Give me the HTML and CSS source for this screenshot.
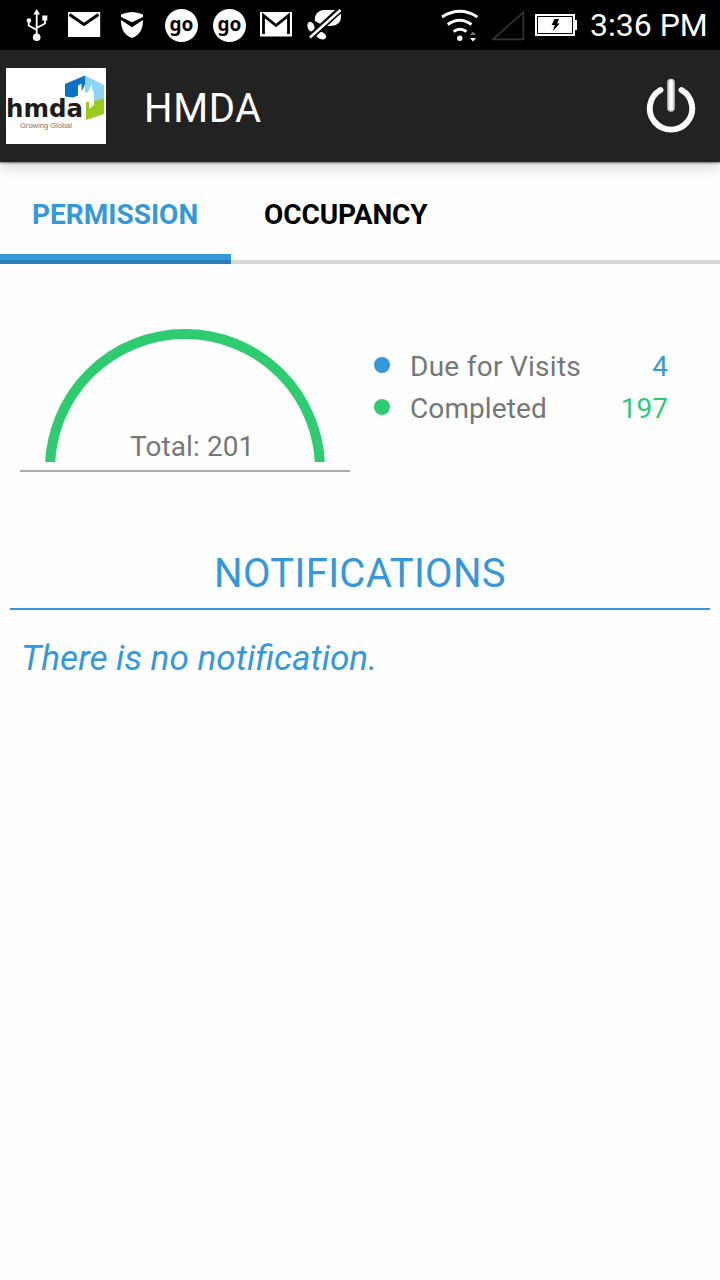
FILE: index.html
```html
<!DOCTYPE html>
<html lang="en">
<head>
<meta charset="utf-8">
<title>HMDA</title>
<link rel="stylesheet" href="styles.css">
</head>
<body>
<header class="status-bar">
  <div class="status-icons">
    <svg class="icon-usb" width="22" height="34" viewBox="26 8 22 34">
      <g fill="none" stroke="#fff" stroke-width="1.8"><path d="M36.700 14V35M28.700 21V25.500L36.700 30M45 19V23.500L36.700 28"/></g>
      <g fill="#fff"><path d="M36.700 9l3.300 5.500h-6.600z"/><circle cx="36.700" cy="37.200" r="3.800"/><circle cx="28.900" cy="20.500" r="2.300"/><path d="M42.300 15.500h5v5h-5z"/></g>
    </svg>
    <svg width="34" height="34" viewBox="67 8 34 34">
      <path fill="#fff" d="M68 12h32.200v25H68z"/><path d="M69.500 14.500L84 24.500 98.500 14.500" fill="none" stroke="#000" stroke-width="3"/>
    </svg>
    <svg width="24" height="34" viewBox="120 8 24 34">
      <path fill="#fff" d="M121 14.500Q126 12 132 12t11 2.500V17l-11 5.300L121 17zM121 20l11 7.300 11-7.300c0 8-2.500 15-11 18-8.500-3-11-10-11-18z"/>
    </svg>
    <span class="go-badge">go</span>
    <span class="go-badge">go</span>
    <svg class="icon-gmail" width="34" height="34" viewBox="259 8 34 34">
      <path fill="#fff" d="M260 12h32v24.500h-32z"/><path d="M263.500 34V15.500L276 25.500 288.500 15.500V34" fill="none" stroke="#000" stroke-width="2.800"/>
    </svg>
    <svg width="36" height="34" viewBox="306 8 36 34">
      <g fill="#fff"><path d="M315 21c-1-6 3-11 9-11h12c5 0 5 3 5 7 0 6-5 9-11 9h-6z"/><ellipse cx="311" cy="26.800" rx="3.400" ry="5.200" transform="rotate(-20 311 26.800)"/><ellipse cx="321" cy="35.500" rx="5.500" ry="3.500" transform="rotate(25 321 35.500)"/></g>
      <path d="M308 39L341 9" stroke="#000" stroke-width="6.500"/><path d="M310 37.500L340.500 10" stroke="#fff" stroke-width="2.600"/>
    </svg>
  </div>
  <div class="status-system">
    <svg width="38" height="34" viewBox="440 8 38 34">
      <g fill="none" stroke="#fff" stroke-width="2.800"><path d="M442 17Q459.700 5.500 477.500 17M447.700 24.500Q459.700 16 471.500 24.500M453.500 31.500Q460 27 466.500 31.500"/></g>
      <circle cx="459.800" cy="38.200" r="2.700" fill="#fff"/><path fill="#777" d="M470 35l3-3.500 3 3.500z"/><path fill="#fff" d="M470 38h6l-3 3.500z"/>
    </svg>
    <svg width="34" height="34" viewBox="491 8 34 34"><path d="M493 39.300L523.300 12.300V39.300z" fill="none" stroke="#333" stroke-width="1.700"/></svg>
    <svg width="43" height="34" viewBox="535 8 43 34">
      <path fill="#fff" d="M535 14h40v6h2v10h-2v6h-40z"/><path d="M537.500 16.500h35v17h-35z" fill="none" stroke="#000"/><path d="M554.500 19h4.500l-1.800 4.500h2.600l-7 7.500 2-6h-3.200z"/>
    </svg>
    <span class="clock">3:36 PM</span>
  </div>
</header>
<div class="app-bar">
  <svg class="logo" width="100" height="76" viewBox="6 68 100 76">
    <path fill="#fff" d="M6 68h100v76H6z"/>
    <path fill="#0872c4" d="M65 84l20-8.500v9l-3.500 7v-8l-3.500 2v10l-5 2-8-1z"/>
    <path fill="#8bd3f7" d="M85 75.500l19 9.500v13l-10 3v-9l-2-3v-5l-4 8-3 1z"/>
    <path fill="#99ca20" d="M104 98v16l-18 6v-18h3v7l5-4v-4z"/>
    <text class="logo-name" x="6" y="116.800" textLength="77" lengthAdjust="spacingAndGlyphs">hmda</text>
    <text class="logo-motto" x="20" y="127.500" textLength="52" lengthAdjust="spacingAndGlyphs">Growing Global</text>
  </svg>
  <h1 class="app-title">HMDA</h1>
  <svg width="50" height="56" viewBox="646 78 50 56">
    <g fill="none" stroke="#fff" stroke-linecap="round"><path d="M660.500 90A21.200 21.200 0 1 0 681.500 90" stroke-width="5.900"/><path d="M671 82.500v25.500" stroke="#ccc" stroke-width="7.500"/><path d="M671 81.500v27" stroke-width="3.500"/></g>
  </svg>
</div>
<nav class="tabs">
  <a class="tab tab-active">PERMISSION</a>
  <a class="tab">OCCUPANCY</a>
</nav>
<main>
  <section class="summary">
    <div class="gauge">
      <svg class="gauge-arc" width="280" height="133" viewBox="45 329 280 133"><circle cx="185" cy="469" r="135" fill="none" stroke="#2ecc71" stroke-width="10"/></svg>
      <span class="gauge-total">Total: 201</span>
    </div>
    <div class="legend">
      <div class="legend-row visits"><i class="dot"></i><span class="label label-visits">Due for Visits</span><span class="value">4</span></div>
      <div class="legend-row completed"><i class="dot"></i><span class="label">Completed</span><span class="value">197</span></div>
    </div>
  </section>
  <section class="notifications">
    <h2 class="notifications-title">NOTIFICATIONS</h2>
    <p class="empty">There is no notification.</p>
  </section>
</main>
</body>
</html>
```
FILE: styles.css
```css
* { box-sizing: border-box; }
body { margin: 0; height: 1280px; background: #fefefe; font-family: Roboto, sans-serif; overflow: hidden; }
svg { display: block; flex: none; }
.status-bar { height: 50px; background: #000; display: flex; justify-content: space-between; align-items: center; padding: 0 12px 0 26px; }
.status-icons { display: flex; align-items: center; gap: 14px; }
.icon-usb { margin-right: 5px; }
.status-icons svg:nth-child(2) { margin-right: 5px; }
.status-icons svg:nth-child(3) { margin-right: 7px; }
.go-badge { width: 33px; height: 33px; border-radius: 50%; background: #fff; color: #000; font: bold 19px/30px "Noto Sans", sans-serif; text-align: center; margin-right: 1px; }
.icon-gmail { margin: 0 -1px 0 -2px; }
.status-system { display: flex; align-items: center; }
.status-system svg:nth-child(1) { margin-right: 13px; }
.status-system svg:nth-child(2) { margin-right: 10px; }
.clock { color: #fff; font-size: 32px; line-height: 52px; width: 118px; margin-left: 12px; white-space: nowrap; }
.app-bar { position: relative; height: 112px; background: #222; display: flex; align-items: center; padding: 0 24px 0 6px; box-shadow: 0 1px 2px rgba(0,0,0,.55), 0 5px 14px rgba(0,0,0,.16); }
.logo-name { font: bold 25px "DejaVu Sans", sans-serif; fill: #1c1c1c; }
.logo-motto { font: 7.5px "Liberation Sans", sans-serif; fill: #777; }
.app-title { flex: 1; margin: 6px 0 0 38px; color: #fff; font-size: 40px; font-weight: 400; line-height: 48px; letter-spacing: .6px; }
.tabs { height: 102px; display: flex; border-bottom: 4px solid #d8d8d8; }
.tab { height: 102px; padding: 0 32px 0 33px; font-size: 28px; font-weight: 700; line-height: 106px; letter-spacing: -.1px; color: #000; }
.tab-active { width: 231px; padding: 0 0 0 32px; letter-spacing: 0; color: #3498db; background: linear-gradient(#3498db 6px, #2980b9 6px) bottom / 100% 10px no-repeat; }
.summary { display: flex; height: 208px; padding-left: 20px; margin-bottom: 70px; }
.gauge { position: relative; width: 330px; border-bottom: 2px solid #aaa; padding: 65px 0 0 25px; }
.gauge-total { position: absolute; left: 110px; top: 166px; font-size: 28px; line-height: 34px; color: #777; white-space: nowrap; letter-spacing: .1px; }
.legend { width: 318px; padding: 81px 0 0 24px; }
.legend-row { display: flex; align-items: center; height: 42px; font-size: 28px; }
.dot { width: 16px; height: 16px; border-radius: 50%; margin: -2px 20px 0 0; background: currentColor; }
.label { flex: 1; color: #777; white-space: nowrap; letter-spacing: .1px; }
.label-visits { letter-spacing: .27px; }
.visits { color: #3498db; }
.completed { color: #2ecc71; }
.notifications { padding: 0 10px; color: #3498db; }
.notifications-title { height: 68px; margin: 0; border-bottom: 2px solid #3498db; font-size: 40px; font-weight: 400; line-height: 64px; text-align: center; letter-spacing: .35px; }
.empty { margin: 24px 11px; font-size: 35.15px; font-style: italic; line-height: 48px; }
```
